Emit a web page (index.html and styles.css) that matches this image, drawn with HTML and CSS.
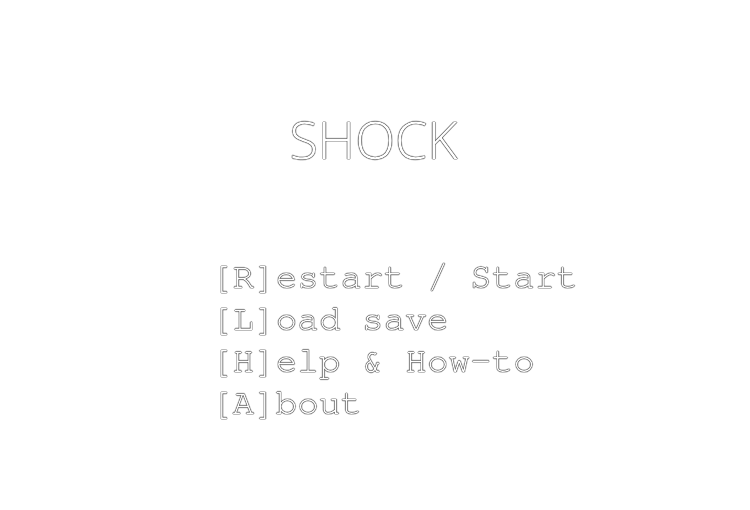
FILE: index.html
```html
<!DOCTYPE html>
<html>
<head>
<meta charset="utf-8">
<link rel="stylesheet" href="styles.css">
</head>
<body>
<main class="screen">
  <h1 class="title">SHOCK</h1>
  <ul class="menu">
    <li class="item">[R]estart / Start</li>
    <li class="item">[L]oad save</li>
    <li class="item">[H]elp &amp; How-to</li>
    <li class="item">[A]bout</li>
  </ul>
</main>
</body>
</html>
```
FILE: styles.css
```css
html, body {
  margin: 0;
  padding: 0;
  background: #fff;
}
.screen {
  width: 750px;
  height: 510px;
  display: flex;
  flex-direction: column;
  align-items: center;
  color: #fff;
  text-shadow: 0 0 1px #000, 0 0 1px #000, 0 0 1px #000;
  will-change: transform;
  -webkit-font-smoothing: antialiased;
}
.title {
  margin: 107px 0 0 -3px;
  font-family: "Open Sans", sans-serif;
  font-weight: 300;
  font-size: 52px;
  line-height: 64px;
}
.menu {
  list-style: none;
  margin: 85px 0 0 39px;
  padding: 0;
  font-family: "FreeMono", "Nimbus Mono PS", "Nimbus Mono L", "Courier", "Liberation Mono", monospace;
  font-size: 36px;
  line-height: 42px;
}
.item {
  white-space: pre;
}
```
